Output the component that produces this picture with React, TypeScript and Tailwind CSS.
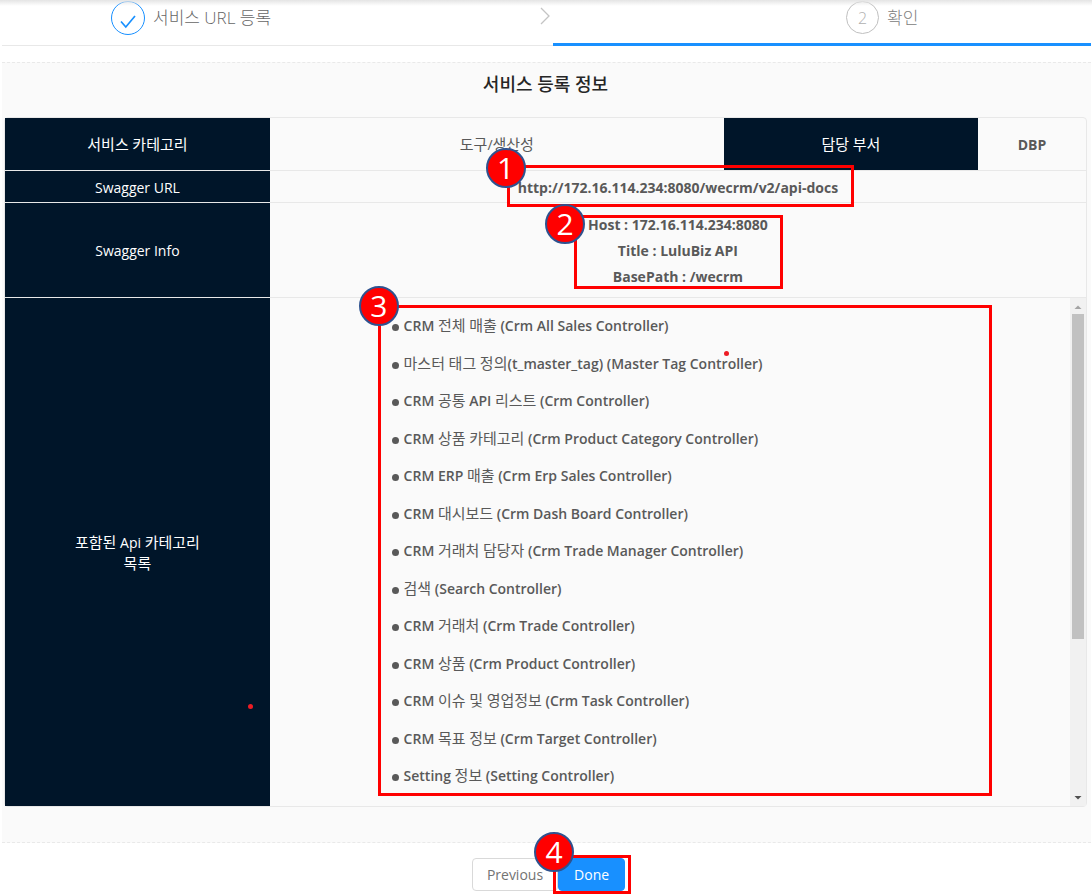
import type { ReactNode } from "react";

const categories = [
  "CRM 전체 매출 (Crm All Sales Controller)",
  "마스터 태그 정의(t_master_tag) (Master Tag Controller)",
  "CRM 공통 API 리스트 (Crm Controller)",
  "CRM 상품 카테고리 (Crm Product Category Controller)",
  "CRM ERP 매출 (Crm Erp Sales Controller)",
  "CRM 대시보드 (Crm Dash Board Controller)",
  "CRM 거래처 담당자 (Crm Trade Manager Controller)",
  "검색 (Search Controller)",
  "CRM 거래처 (Crm Trade Controller)",
  "CRM 상품 (Crm Product Controller)",
  "CRM 이슈 및 영업정보 (Crm Task Controller)",
  "CRM 목표 정보 (Crm Target Controller)",
  "Setting 정보 (Setting Controller)",
];

/* Hangul runs stay at regular weight, one size up from the Latin text. */
function Mixed({ text }: { text: string }) {
  return (
    <>
      {text.split(/([\uac00-\ud7a3]+)/).map((part, i) =>
        i % 2 === 1 ? (
          <span key={i} className="text-[15px] font-normal">
            {part}
          </span>
        ) : (
          part
        ),
      )}
    </>
  );
}

function Marker({ n, className, badge }: { n: number; className: string; badge: string }) {
  return (
    <div className={`pointer-events-none absolute z-10 border-3 border-[#ff0000] ${className}`}>
      <span
        className={`absolute flex size-10 items-center justify-center rounded-full border-2 border-[#2f528f] bg-[#ff0000] text-[30px] leading-none font-normal text-white ${badge}`}
      >
        {n}
      </span>
    </div>
  );
}

function RowHead({ children }: { children: ReactNode }) {
  return (
    <th
      scope="row"
      className="border-b border-[#e8e8e8] bg-[#001529] px-4 pt-0.5 text-center font-normal text-white"
    >
      {children}
    </th>
  );
}

function ScrollBar() {
  return (
    <div className="flex w-4 shrink-0 flex-col items-center bg-[#f1f1f1] pt-1 pb-1" aria-hidden="true">
      <svg width="8" height="10" viewBox="0 0 8 10">
        <path d="M0.5 7 L4 3.5 L7.5 7 Z" fill="#a3a3a3" />
      </svg>
      <div className="mt-0.5 h-[325px] w-3 bg-[#c1c1c1]" />
      <div className="grow" />
      <svg width="8" height="8" viewBox="0 0 8 8">
        <path d="M0.5 2 L4 5.5 L7.5 2 Z" fill="#505050" />
      </svg>
    </div>
  );
}

export default function App() {
  return (
    <div className="bg-white pr-px pl-0.5 font-['Open_Sans','Noto_Sans_CJK_KR',sans-serif] text-sm text-[#595959]">
      <div className="absolute inset-x-0 top-0 h-1.5 bg-linear-to-b from-[#e4e4e4] to-transparent" />

      <ol className="grid grid-cols-[551fr_538fr] text-[17px] font-light">
        <li className="flex h-[46px] items-start border-b border-[#e8e8e8] pt-px pl-[109px]">
          <span className="flex size-[34px] shrink-0 items-center justify-center rounded-full border border-[#1890ff]">
            <svg width="16" height="14" viewBox="0 0 16 14" className="mt-2" fill="none" stroke="#1890ff" strokeWidth="1.7">
              <path d="M1 6.5 L5.8 12 L15 1" />
            </svg>
          </span>
          <span className="ml-2 leading-[34px] text-[#666666]">서비스 URL 등록</span>
          <svg width="12" height="20" viewBox="0 0 12 20" className="mt-1 mr-0.5 ml-auto" fill="none" stroke="#c4c4c4" strokeWidth="1.3">
            <path d="M2 3 L10 11 L2 19" />
          </svg>
        </li>
        <li className="flex h-[46px] items-start border-b-3 border-[#1890ff] pt-px pl-[293px]">
          <span className="flex size-[33px] shrink-0 items-center justify-center rounded-full border border-[#c0c0c0] text-base text-[#b0b0b0]">
            2
          </span>
          <span className="ml-2 leading-[34px] text-[#808080]">확인</span>
        </li>
      </ol>

      <main className="mt-4 border-y border-dashed border-[#e9e9e9] bg-[#fafafa] pr-1 pb-[35px] pl-0.5">
        <h1 className="pt-[9px] pb-5 text-center text-lg leading-[25px] font-medium text-[#262626]">
          서비스 등록 정보
        </h1>
        <div className="rounded border border-[#e8e8e8]">
          <table className="w-full table-fixed border-separate border-spacing-0">
            <colgroup>
              <col className="w-[24.5%]" />
              <col className="w-[42%]" />
              <col className="w-[23.5%]" />
              <col className="w-[10%]" />
            </colgroup>
            <tbody>
              <tr className="h-[53px]">
                <RowHead>
                  <Mixed text="서비스 카테고리" />
                </RowHead>
                <td className="border-b border-[#e8e8e8] pt-0.5 text-center">
                  <Mixed text="도구/생산성" />
                </td>
                <RowHead>
                  <Mixed text="담당 부서" />
                </RowHead>
                <td className="border-b border-[#e8e8e8] pt-0.5 text-center font-bold">DBP</td>
              </tr>
              <tr className="h-8">
                <RowHead>Swagger URL</RowHead>
                <td colSpan={3} className="border-b border-[#e8e8e8] pt-0.5 text-center font-bold">
                  <span className="relative inline-block">
                    http://172.16.114.234:8080/wecrm/v2/api-docs
                    <Marker n={1} className="-top-[13px] -right-4 -bottom-[9px] -left-[11px]" badge="-top-5 -left-6" />
                  </span>
                </td>
              </tr>
              <tr className="h-[95px]">
                <RowHead>Swagger Info</RowHead>
                <td colSpan={3} className="border-b border-[#e8e8e8] pt-0.5 text-center font-bold">
                  <div className="relative inline-block leading-[26px]">
                    <p>Host : 172.16.114.234:8080</p>
                    <p>Title : LuluBiz API</p>
                    <p>BasePath : /wecrm</p>
                    <Marker n={2} className="top-[3px] -right-[15px] bottom-px -left-[14px]" badge="-top-3.5 -left-8" />
                  </div>
                </td>
              </tr>
              <tr>
                <th scope="row" className="relative bg-[#001529] px-4 pt-0.5 leading-[21px] font-normal text-white">
                  <Mixed text="포함된 Api 카테고리" />
                  <br />
                  <Mixed text="목록" />
                  <span className="absolute right-[17px] bottom-[97px] size-[5px] rounded-full bg-[#ed1c24]" />
                </th>
                <td className="p-0" colSpan={3}>
                  <div className="relative flex h-[508px]">
                    <div className="grow overflow-hidden pt-4 pl-0.5 font-semibold">
                      <ul className="mx-auto flex h-[473px] w-[70%] flex-col justify-between leading-[22px]">
                        {categories.map((name) => (
                          <li key={name} className="flex items-center gap-[5px] whitespace-nowrap">
                            <span className="mt-1 size-[7px] rounded-full bg-[#595959]" />
                            <span>
                              <Mixed text={name} />
                            </span>
                          </li>
                        ))}
                      </ul>
                    </div>
                    <ScrollBar />
                    <Marker
                      n={3}
                      className="top-[7px] right-[94px] bottom-[10px] left-[108px]"
                      badge="-top-5.5 -left-5.5"
                    />
                    <span className="absolute top-[53px] left-[454px] size-[5px] rounded-full bg-[#ed1c24]" />
                  </div>
                </td>
              </tr>
            </tbody>
          </table>
        </div>
      </main>

      <div className="flex justify-center pt-[15px] pb-1 pl-1">
        <button type="button" className="h-[33px] rounded border border-[#d9d9d9] bg-white px-3.5 text-[#737373]">
          Previous
        </button>
        <div className="relative">
          <button type="button" className="h-[33px] rounded border border-[#1890ff] bg-[#1890ff] px-[15px] text-white">
            Done
          </button>
          <Marker n={4} className="-top-[3px] -right-1.5 -bottom-[3px] -left-[5px]" badge="-top-6.5 -left-5.5" />
        </div>
      </div>
    </div>
  );
}
